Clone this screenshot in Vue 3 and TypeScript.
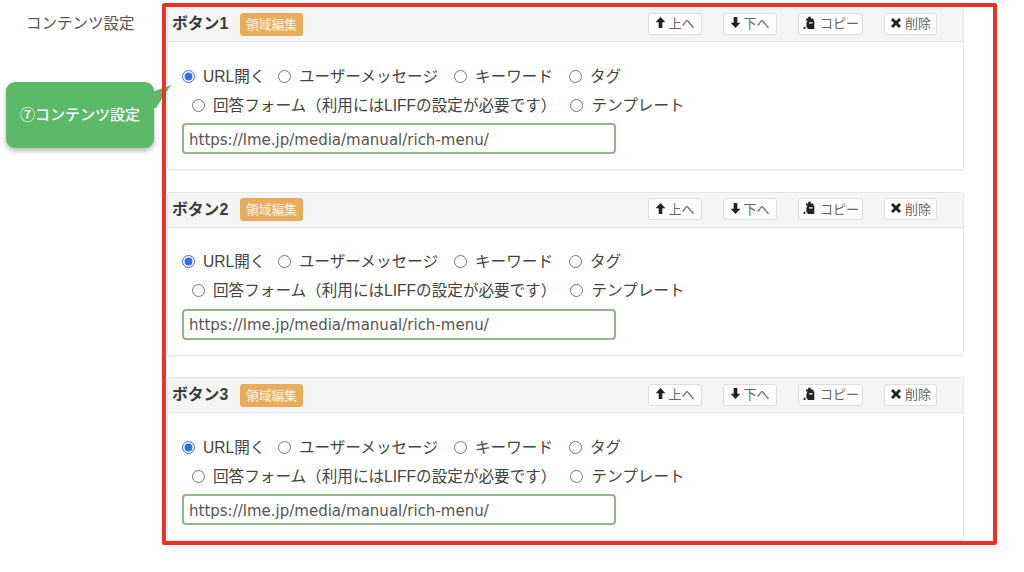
<script setup lang="ts">
const panels = [1, 2, 3].map((n) => `ボタン${n}`)
const url = 'https://lme.jp/media/manual/rich-menu/'
</script>

<template>
  <main class="page">
    <div class="label-col">
      <div class="label">コンテンツ設定</div>
    </div>
    <div class="panels">
      <section v-for="(title, i) in panels" :key="title" class="panel">
        <header class="panel-head">
          <strong class="title">{{ title }}</strong>
          <span class="badge">領域編集</span>
          <div class="actions">
            <button class="btn up">
              <svg viewBox="0 0 12 14" width="11" height="13"><path d="M6 1 11.3 6.6H8V13H4V6.6H.7Z" fill="#222" /></svg>上へ
            </button>
            <button class="btn down">
              <svg viewBox="0 0 12 14" width="11" height="13"><path d="M6 13 11.3 7.4H8V1H4V7.4H.7Z" fill="#222" /></svg>下へ
            </button>
            <button class="btn copy">
              <svg viewBox="0 0 14 14" width="14" height="14"><path fill-rule="evenodd" d="M6.2.8h2.6v1.6h2.6V4.6h.9V13H5.6v-1.4H4.4V6.8l1.2-2.2H4V2.4h2.2ZM7 6.2v1.2h3.6V6.2ZM1.6 10.8h1.8V13H1.6Z" fill="#222" /></svg>コピー
            </button>
            <button class="btn del">
              <svg viewBox="0 0 12 12" width="12" height="12"><path d="M1 3 3 1l3 3 3-3 2 2-3 3 3 3-2 2-3-3-3 3-2-2 3-3Z" fill="#222" /></svg>削除
            </button>
          </div>
        </header>
        <div class="panel-body">
          <div class="radios first">
            <label class="radio url-open"><input type="radio" :name="`r${i}`" checked />URL開く</label>
            <label class="radio"><input type="radio" :name="`r${i}`" />ユーザーメッセージ</label>
            <label class="radio"><input type="radio" :name="`r${i}`" />キーワード</label>
            <label class="radio"><input type="radio" :name="`r${i}`" />タグ</label>
          </div>
          <div class="radios second">
            <label class="radio"><input type="radio" :name="`r${i}`" />回答フォーム（利用にはLIFFの設定が必要です）</label>
            <label class="radio"><input type="radio" :name="`r${i}`" />テンプレート</label>
          </div>
          <input class="url" type="text" :value="url" />
        </div>
      </section>
    </div>
    <div class="callout">⑦コンテンツ設定
      <svg class="tail" viewBox="0 0 20 30" width="20" height="30"><path d="M0 8 19 1 4 24 0 24Z" fill="#5cb96a" /></svg>
    </div>
    <div class="frame"></div>
  </main>
</template>

<style scoped>
.page {
  position: relative;
  display: flex;
  width: 1024px;
  height: 572px;
  overflow: hidden;
  background: #fff;
  color: #444;
  font-family: "Liberation Sans", "Noto Sans CJK JP", sans-serif;
}
.label-col {
  width: 167px;
  flex: none;
  padding: 14px 0 0 26px;
  box-sizing: border-box;
}
.label {
  font-size: 15.5px;
  line-height: 20px;
  color: #555;
}
.panels {
  width: 797px;
  height: 538px;
  margin-top: 6px;
  overflow: hidden;
  display: flex;
  flex-direction: column;
  gap: 21.5px;
}
.panel {
  flex: none;
  height: 164px;
  box-sizing: border-box;
  border: 1px solid #e6e6e6;
  border-radius: 3px;
  box-shadow: 0 1px 1px rgba(0, 0, 0, 0.05);
}
.panel-head {
  display: flex;
  align-items: center;
  height: 35px;
  box-sizing: border-box;
  padding: 0 26px 0 4px;
  background: #f5f5f5;
  border-bottom: 1px solid #e2e2e2;
}
.title {
  width: 68px;
  padding-bottom: 3px;
  font-size: 15.8px;
  color: #3a3a3a;
  font-weight: 700;
}
.badge {
  width: 63px;
  height: 23px;
  border-radius: 3px;
  background: #e8ad5c;
  color: #fdf3e2;
  font-size: 12.8px;
  line-height: 23px;
  text-align: center;
}
.actions {
  display: flex;
  margin: 0 0 1px auto;
}
.btn {
  display: flex;
  align-items: center;
  justify-content: center;
  gap: 2px;
  height: 22px;
  padding: 0 0 2px;
  box-sizing: border-box;
  background: #fff;
  border: 1px solid #ddd;
  border-radius: 3px;
  color: #666;
  font: 13px "Liberation Sans", "Noto Sans CJK JP", sans-serif;
}
.up, .down { width: 54px; margin-right: 21px; }
.copy { width: 65px; margin-right: 21px; gap: 4px; }
.del { width: 53px; gap: 3px; }
.panel-body {
  padding: 19px 14px 0;
}
.radios {
  display: flex;
  height: 29px;
  align-items: center;
}
.first { gap: 16px; }
.second { gap: 14px; padding-left: 10px; }
.radio {
  display: flex;
  align-items: center;
  padding-bottom: 2px;
  font-size: 15.6px;
  color: #444;
  white-space: nowrap;
}
.url-open { margin-right: -3.5px; }
.radio input {
  width: 13px;
  height: 13px;
  margin: 3px 8px 0 0;
  accent-color: #2f6fed;
}
.url {
  display: block;
  width: 434px;
  height: 31px;
  box-sizing: border-box;
  margin-top: 4px;
  padding: 2px 5px 0;
  border: 2px solid #93b48e;
  border-radius: 4px;
  background: #fff;
  color: #555;
  font: 15px "DejaVu Sans", sans-serif;
  outline: none;
}
.callout {
  position: absolute;
  left: 6px;
  top: 82px;
  width: 148px;
  height: 66px;
  border-radius: 9px;
  background: #5cb96a;
  box-shadow: 0 3px 5px rgba(0, 0, 0, 0.28);
  color: #fff;
  font-size: 15px;
  font-weight: 500;
  line-height: 65px;
  text-align: center;
}
.tail {
  position: absolute;
  left: 146px;
  top: 2px;
}
.frame {
  position: absolute;
  left: 162px;
  top: 3px;
  width: 835px;
  height: 542px;
  box-sizing: border-box;
  border: 4px solid #ee3124;
  border-radius: 2px;
  pointer-events: none;
}
</style>
